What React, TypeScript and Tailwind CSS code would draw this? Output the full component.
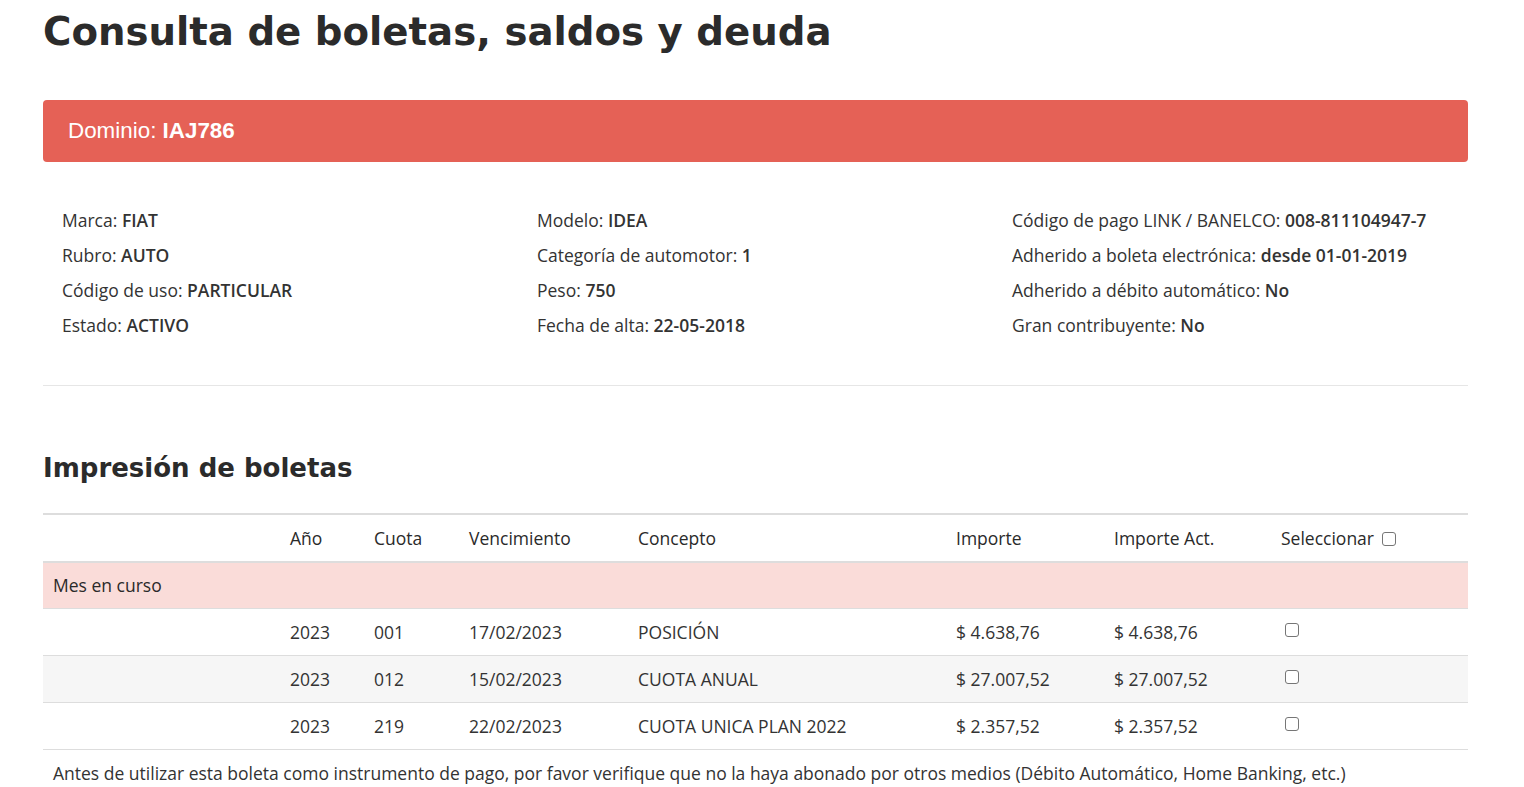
import React from "react";

const info: [string, string][][] = [
  [
    ["Marca", "FIAT"],
    ["Rubro", "AUTO"],
    ["Código de uso", "PARTICULAR"],
    ["Estado", "ACTIVO"],
  ],
  [
    ["Modelo", "IDEA"],
    ["Categoría de automotor", "1"],
    ["Peso", "750"],
    ["Fecha de alta", "22-05-2018"],
  ],
  [
    ["Código de pago LINK / BANELCO", "008-811104947-7"],
    ["Adherido a boleta electrónica", "desde 01-01-2019"],
    ["Adherido a débito automático", "No"],
    ["Gran contribuyente", "No"],
  ],
];

const rows = [
  ["2023", "001", "17/02/2023", "POSICIÓN", "$ 4.638,76", "$ 4.638,76"],
  ["2023", "012", "15/02/2023", "CUOTA ANUAL", "$ 27.007,52", "$ 27.007,52"],
  ["2023", "219", "22/02/2023", "CUOTA UNICA PLAN 2022", "$ 2.357,52", "$ 2.357,52"],
];

function Box({ className = "" }: { className?: string }) {
  return (
    <span
      className={
        "inline-block w-[14px] h-[14px] rounded-[3px] border border-[#767676] bg-white align-middle " +
        className
      }
    />
  );
}

export default function App() {
  return (
    <div className="bg-white min-h-[787px] text-[#333] font-['Open_Sans',sans-serif]">
      <div className="ml-[43px] w-[1425px]">
        <h1 className="pt-[8px] text-[38.7px] leading-[48px] font-bold text-[#2b2b2b] font-['DejaVu_Sans',sans-serif]">
          Consulta de boletas, saldos y deuda
        </h1>
        <div className="mt-[44px] h-[62px] rounded-[4px] bg-[#e56156] flex items-center px-[25px] text-white text-[22.4px] font-['Liberation_Sans',Arial,sans-serif]">
          Dominio:&nbsp;<b>IAJ786</b>
        </div>
        <div className="grid grid-cols-3 pt-[41px] pb-[42px] border-b border-[#e6e6e6]">
          {info.map((col, i) => (
            <div key={i} className="pl-[19px] flex flex-col">
              {col.map(([k, v]) => (
                <div key={k} className="text-[17.5px] leading-[35px]">
                  {k}: <span className="font-semibold">{v}</span>
                </div>
              ))}
            </div>
          ))}
        </div>
        <h2 className="mt-[64px] text-[26px] leading-[36px] font-bold text-[#2b2b2b] font-['DejaVu_Sans',sans-serif]">
          Impresión de boletas
        </h2>
        <table className="mt-[27px] w-full table-fixed border-collapse text-[17.5px]">
          <thead>
            <tr className="border-t-2 border-b-2 border-[#dddddd] h-[48px]">
              <th className="w-[237px]"></th>
              <th className="w-[84px] text-left font-medium text-[#2a2a2a] px-[10px]">Año</th>
              <th className="w-[95px] text-left font-medium text-[#2a2a2a] px-[10px]">Cuota</th>
              <th className="w-[169px] text-left font-medium text-[#2a2a2a] px-[10px]">Vencimiento</th>
              <th className="w-[318px] text-left font-medium text-[#2a2a2a] px-[10px]">Concepto</th>
              <th className="w-[158px] text-left font-medium text-[#2a2a2a] px-[10px]">Importe</th>
              <th className="w-[167px] text-left font-medium text-[#2a2a2a] px-[10px]">Importe Act.</th>
              <th className="text-left font-medium text-[#2a2a2a] px-[10px] whitespace-nowrap">
                Seleccionar <Box className="ml-[3px] -mt-[2px]" />
              </th>
            </tr>
          </thead>
          <tbody>
            <tr className="bg-[#fadcd9] border-b border-[#dddddd] h-[46px]">
              <td colSpan={8} className="px-[10px] font-medium text-[#2a2a2a]">Mes en curso</td>
            </tr>
            {rows.map((r, i) => (
              <tr
                key={i}
                className={
                  "border-b border-[#dddddd] h-[47px] " + (i === 1 ? "bg-[#f6f6f6]" : "bg-white")
                }
              >
                <td></td>
                {r.map((c, j) => (
                  <td key={j} className="px-[10px] pt-[2px]">
                    {c}
                  </td>
                ))}
                <td className="px-[10px] pl-[14px]">
                  <Box className="-mt-[8px]" />
                </td>
              </tr>
            ))}
          </tbody>
        </table>
        <p className="px-[10px] pt-[11px] text-[17.5px] leading-[24px]">
          Antes de utilizar esta boleta como instrumento de pago, por favor verifique que no la haya abonado por otros medios (Débito Automático, Home Banking, etc.)
        </p>
      </div>
    </div>
  );
}
